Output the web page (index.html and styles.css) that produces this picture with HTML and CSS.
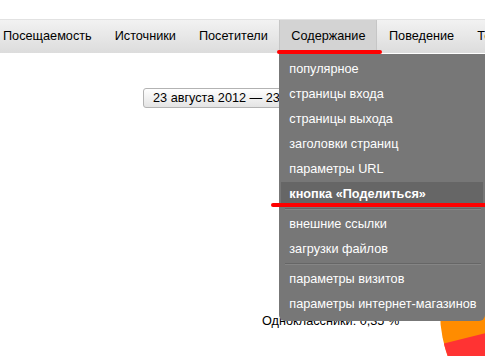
FILE: index.html
```
<!DOCTYPE html>
<html lang="ru">
<head>
<meta charset="utf-8">
<title>Содержание</title>
<link rel="stylesheet" href="styles.css">
</head>
<body>
<div class="page">
  <nav class="tabs">
    <div class="tab">Посещаемость</div>
    <div class="tab">Источники</div>
    <div class="tab">Посетители</div>
    <div class="tab tab-active">Содержание
      <div class="menu">
        <div class="item">популярное</div>
        <div class="item">страницы входа</div>
        <div class="item">страницы выхода</div>
        <div class="item">заголовки страниц</div>
        <div class="item">параметры URL</div>
        <div class="item item-current">кнопка «Поделиться»</div>
        <div class="sep"></div>
        <div class="item">внешние ссылки</div>
        <div class="item">загрузки файлов</div>
        <div class="sep"></div>
        <div class="item">параметры визитов</div>
        <div class="item">параметры интернет-магазинов</div>
      </div>
    </div>
    <div class="tab">Поведение</div>
    <div class="tab">Технологии</div>
  </nav>
  <div class="dates">
    <button class="date-btn">23 августа 2012 — 23 августа 2012</button>
  </div>
  <div class="bottom">
    <div class="legend">Одноклассники: 0,35 %</div>
    <svg class="pie" width="55" height="56" viewBox="0 0 55 56">
      <circle cx="140" cy="12" r="130" fill="#ff8c00"/>
      <path d="M140,12 L13.9,43.5 A130,130 0 0,0 140,142 Z" fill="#ff3333"/>
    </svg>
  </div>
</div>
</body>
</html>
```
FILE: styles.css
```
html, body {
  margin: 0;
  padding: 0;
  background: #fff;
  overflow: hidden;
}
.page {
  width: 485px;
  height: 356px;
  overflow: hidden;
  font-family: "Liberation Sans", Arial, sans-serif;
  font-size: 12.7px;
  color: #000;
}
.tabs {
  display: flex;
  margin-top: 19px;
  margin-left: -8.5px;
  height: 34px;
  width: 600px;
  background: linear-gradient(#f2f2f2, #dcdcdc);
  border-top: 1px solid #e2e2e2;
  box-sizing: border-box;
  white-space: nowrap;
}
.tab {
  padding: 0 11.5px;
  line-height: 33px;
  position: relative;
}
.tab-active {
  background: #d3d3d3;
  border-left: 1px solid #c6c6c6;
  border-right: 1px solid #c6c6c6;
  padding: 0 11px;
}
.tab-active::after {
  content: "";
  position: absolute;
  left: -3px;
  right: -6px;
  bottom: -1px;
  height: 4px;
  border-radius: 2px;
  background: #f00;
  z-index: 3;
}
.menu {
  position: absolute;
  top: 100%;
  left: -1px;
  width: 206px;
  padding: 2.5px 0 4px;
  background: #777;
  border-radius: 0 0 6px 6px;
  color: #fff;
  z-index: 2;
  line-height: 25px;
  margin-top: 1px;
}
.item {
  height: 25px;
  padding-left: 10px;
  position: relative;
}
.item-current {
  font-weight: bold;
  background: #666;
  margin: 0 2px;
  padding-left: 8px;
}
.item-current::after {
  content: "";
  position: absolute;
  left: -10px;
  width: 230px;
  bottom: 0;
  height: 4px;
  border-radius: 2px;
  background: #f00;
}
.sep {
  box-sizing: border-box;
  border-top: 1px solid #666;
  border-bottom: 1px solid #858585;
  height: 2px;
  margin: 1.5px 4px 1.5px 6px;
}
.dates {
  margin-top: 35px;
  padding-left: 143px;
  height: 20px;
}
.date-btn {
  height: 20px;
  padding: 0 9px;
  font-family: "Liberation Sans", Arial, sans-serif;
  font-size: 12.7px;
  color: #000;
  border: 1px solid #b3b3b3;
  border-radius: 3px;
  background: linear-gradient(#ffffff, #e4e4e4);
  white-space: nowrap;
  line-height: 18px;
}
.bottom {
  display: flex;
  margin-top: 192px;
  height: 56px;
}
.legend {
  margin-left: 262px;
  margin-top: 13px;
  line-height: 16px;
}
.pie {
  margin-left: auto;
  display: block;
}
```
